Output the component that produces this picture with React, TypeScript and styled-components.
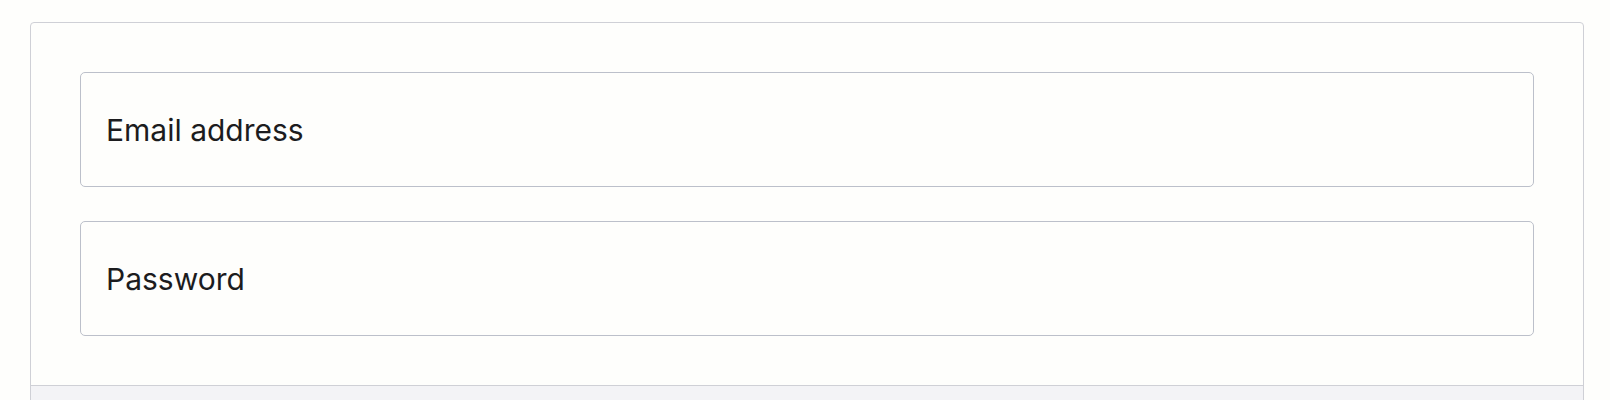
import React from "react";
import styled, { createGlobalStyle } from "styled-components";

const GlobalStyle = createGlobalStyle`
  html, body {
    margin: 0;
    padding: 0;
    background: #fefefc;
    font-family: Inter, "Noto Sans", "Liberation Sans", sans-serif;
  }
`;

const Page = styled.div`
  padding: 22px 26px 0 30px;
  height: 400px;
  box-sizing: border-box;
  overflow: hidden;
`;

const Card = styled.div`
  border: 1px solid #cfd0d6;
  border-radius: 4px 4px 0 0;
  background: #fefefc;
`;

const CardBody = styled.form`
  display: flex;
  flex-direction: column;
  gap: 34px;
  padding: 49px;
  border-bottom: 1px solid #cfd0d6;
`;

const CardFooter = styled.div`
  height: 40px;
  background: #f3f3f6;
`;

const Field = styled.input`
  box-sizing: border-box;
  height: 115px;
  width: 100%;
  padding: 0 24px 0 25px;
  border: 1px solid #bcc0ca;
  border-radius: 5px;
  background: transparent;
  font-family: inherit;
  font-size: 30px;
  color: #1c1c1e;
  outline: none;

  &::placeholder {
    color: #1c1c1e;
    opacity: 1;
  }
`;

const App = () => {
  return (
    <>
      <GlobalStyle />
      <Page>
        <Card>
          <CardBody>
            <Field type="email" placeholder="Email address" />
            <Field type="password" placeholder="Password" />
          </CardBody>
          <CardFooter />
        </Card>
      </Page>
    </>
  );
};

export default App;
